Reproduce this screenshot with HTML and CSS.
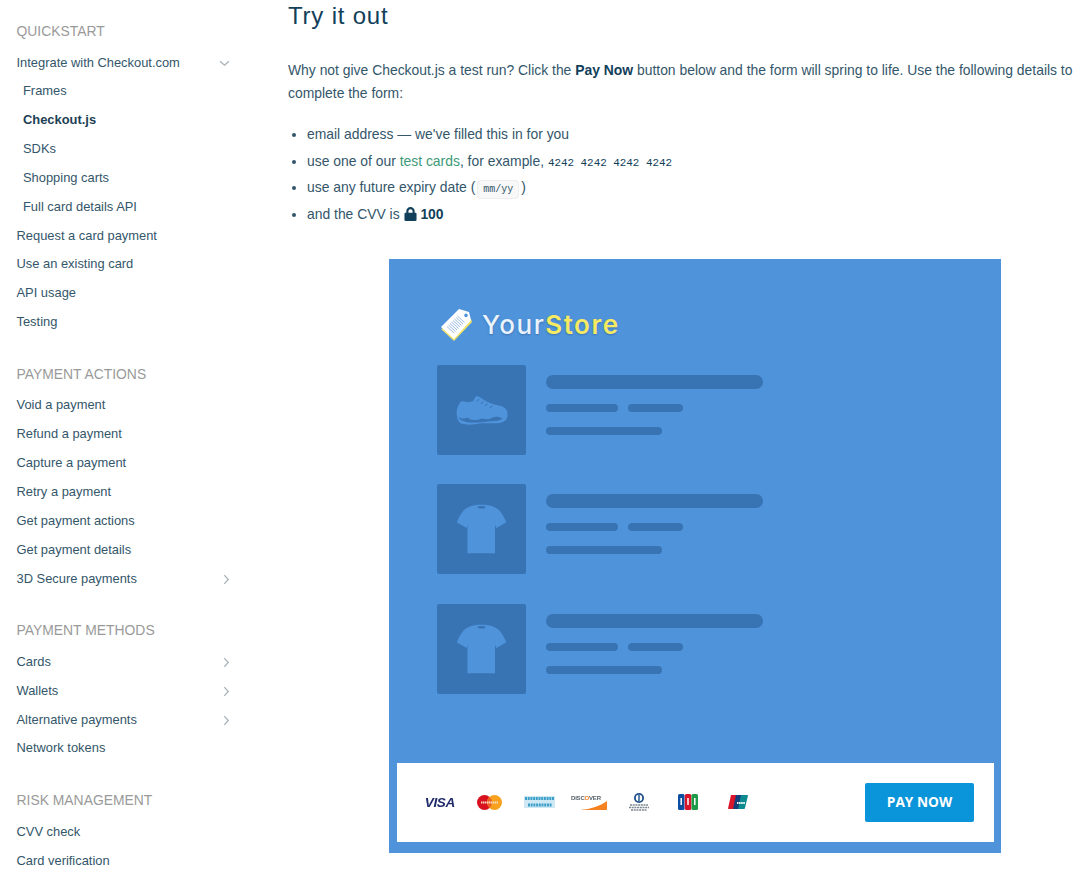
FILE: index.html
```html
<!DOCTYPE html>
<html lang="en">
<head>
    <meta charset="UTF-8">
    <title>Checkout.js - Try it out</title>
    <link rel="stylesheet" href="styles.css">
</head>
<body>
    <nav class="sidebar">
        <h4 class="nav-title">QUICKSTART</h4>
        <ul class="nav-list">
            <li class="nav-item">Integrate with Checkout.com
                <svg class="chevron chevron-down" viewBox="0 0 12 8"><path d="M1 1.500l5 4.500 5-4.500"/></svg>
            </li>
            <li class="nav-item nav-sub">Frames</li>
            <li class="nav-item nav-sub nav-active">Checkout.js</li>
            <li class="nav-item nav-sub">SDKs</li>
            <li class="nav-item nav-sub">Shopping carts</li>
            <li class="nav-item nav-sub">Full card details API</li>
            <li class="nav-item">Request a card payment</li>
            <li class="nav-item">Use an existing card</li>
            <li class="nav-item">API usage</li>
            <li class="nav-item">Testing</li>
        </ul>

        <h4 class="nav-title">PAYMENT ACTIONS</h4>
        <ul class="nav-list">
            <li class="nav-item">Void a payment</li>
            <li class="nav-item">Refund a payment</li>
            <li class="nav-item">Capture a payment</li>
            <li class="nav-item">Retry a payment</li>
            <li class="nav-item">Get payment actions</li>
            <li class="nav-item">Get payment details</li>
            <li class="nav-item">3D Secure payments
                <svg class="chevron" viewBox="0 0 8 12"><path d="M1.500 1l4.500 5-4.500 5"/></svg>
            </li>
        </ul>

        <h4 class="nav-title">PAYMENT METHODS</h4>
        <ul class="nav-list">
            <li class="nav-item">Cards
                <svg class="chevron" viewBox="0 0 8 12"><path d="M1.500 1l4.500 5-4.500 5"/></svg>
            </li>
            <li class="nav-item">Wallets
                <svg class="chevron" viewBox="0 0 8 12"><path d="M1.500 1l4.500 5-4.500 5"/></svg>
            </li>
            <li class="nav-item">Alternative payments
                <svg class="chevron" viewBox="0 0 8 12"><path d="M1.500 1l4.500 5-4.500 5"/></svg>
            </li>
            <li class="nav-item">Network tokens</li>
        </ul>

        <h4 class="nav-title">RISK MANAGEMENT</h4>
        <ul class="nav-list">
            <li class="nav-item">CVV check</li>
            <li class="nav-item">Card verification</li>
        </ul>
    </nav>

    <main class="content">
        <h2 class="page-title">Try it out</h2>
        <p class="intro">Why not give Checkout.js a test run? Click the <strong>Pay Now</strong> button below and the form will spring to life. Use the following details to complete the form:</p>
        <ul class="details">
            <li>email address — we've filled this in for you</li>
            <li>use one of our <a class="link" href="#">test cards</a>, for example, <span class="mono">4242 4242 4242 4242</span></li>
            <li>use any future expiry date (<code class="pill">mm/yy</code>)</li>
            <li>and the CVV is
                <svg class="lock" viewBox="0 0 14 15"><path d="M2.500 6.200V4.400a4.500 4.400 0 0 1 9 0v1.800h.7c.8 0 1.300.5 1.300 1.300v6.200c0 .8-.5 1.300-1.300 1.300H1.800C1 15 .5 14.500.5 13.700V7.500c0-.8.5-1.300 1.300-1.300zm2.300 0h4.400V4.400a2.200 2.100 0 0 0-4.400 0z"/></svg>
                <strong>100</strong></li>
        </ul>

        <div class="demo">
            <div class="store-logo">
                <svg class="tag" viewBox="0 0 34 34">
                    <path class="tag-edge" d="M1 21l13 12 18-19-1-3z"/>
                    <path class="tag-face" d="M1 19L14 31 31 12 29 4 19 1zM26 5.500a1.800 1.800 0 1 0 .01 0z"/>
                    <path class="tag-code" d="M7 18.500l7 6.500M8.500 17l7 6.500M10 15.500l7 6.500M11.500 14l7 6.500M13 12.500l7 6.500M14.500 11l7 6.500M16 9.500l7 6.500M17.500 8l7 6.500"/>
                </svg>
                <span class="store-name">Your<span class="store-accent">Store</span></span>
            </div>

            <div class="product">
                <div class="thumb">
                    <svg viewBox="0 0 89 89">
                        <path class="thumb-shape" d="M20 44C21 40 23 37 25 36 29 37.500 33 37.500 36 36L39 31C42 31 44 33 47 35 52 38 58 40 64 41 68 42 71 45 70.500 50 70.500 54 68 57 63 58 55 59 48 57.500 43 58.500 36 60 29 60 24 58.500 20 56 19 50 20 44z"/>
                        <path class="thumb-wave" d="M21.500 52c3 2 6 2 9 .5 3 3 9 3.500 14 1 4 .5 7 1.500 10-.5 4-2 8-1.500 11 .5-4 3-10 2.500-15 3-6 1-14 1.500-21 .5-4-1-7-2-8-4.500z"/>
                        <path class="thumb-line" d="M42 34l-2 2.500M46 36.500l-2 2.500M50.500 38.500l-2 2.500M55 40.500l-2 2.500"/>
                    </svg>
                </div>
                <div class="lines">
                    <span class="bar bar-title"></span>
                    <div class="bar-row"><span class="bar bar-a"></span><span class="bar bar-b"></span></div>
                    <span class="bar bar-c"></span>
                </div>
            </div>

            <div class="product">
                <div class="thumb">
                    <svg viewBox="0 0 89 89">
                        <path class="thumb-shape" d="M44.500 20.700C37 20.700 31 22.500 27 26 24 29.500 21.500 34 19.700 38.300L29.500 44 30.500 41V69.300H58V41L59.500 44 69.300 38.300C67.500 34 65 29.500 62 26 58 22.500 52 20.700 44.500 20.700z"/>
                        <ellipse class="thumb-collar" cx="44.500" cy="23.300" rx="4" ry="1.200"/>
                    </svg>
                </div>
                <div class="lines">
                    <span class="bar bar-title"></span>
                    <div class="bar-row"><span class="bar bar-a"></span><span class="bar bar-b"></span></div>
                    <span class="bar bar-c"></span>
                </div>
            </div>

            <div class="product">
                <div class="thumb">
                    <svg viewBox="0 0 89 89">
                        <path class="thumb-shape" d="M44.500 20.700C37 20.700 31 22.500 27 26 24 29.500 21.500 34 19.700 38.300L29.500 44 30.500 41V69.300H58V41L59.500 44 69.300 38.300C67.500 34 65 29.500 62 26 58 22.500 52 20.700 44.500 20.700z"/>
                        <ellipse class="thumb-collar" cx="44.500" cy="23.300" rx="4" ry="1.200"/>
                    </svg>
                </div>
                <div class="lines">
                    <span class="bar bar-title"></span>
                    <div class="bar-row"><span class="bar bar-a"></span><span class="bar bar-b"></span></div>
                    <span class="bar bar-c"></span>
                </div>
            </div>

            <div class="pay-bar">
                <div class="card-logos">
                    <span class="card-slot"><span class="visa">VISA</span></span>
                    <span class="card-slot">
                        <svg width="25" height="15" viewBox="0 0 25 15">
                            <circle cx="7.500" cy="7.500" r="7.500" fill="#d8111f"/>
                            <circle cx="17.500" cy="7.500" r="7.500" fill="#f7a11d"/>
                            <path d="M12.500 1.900a7.500 7.500 0 0 1 0 11.200 7.500 7.500 0 0 1 0-11.200z" fill="#ef5f22"/>
                            <path d="M4 7.500h17" stroke="#f6d9c0" stroke-width="2" stroke-dasharray="1.500 .5"/>
                        </svg>
                    </span>
                    <span class="card-slot">
                        <svg width="31" height="12" viewBox="0 0 31 12">
                            <rect width="31" height="12" fill="#cfe9f4"/>
                            <path d="M1 2.500h29M4 9h24" stroke="#3c9fc9" stroke-width="3" stroke-dasharray="2 .7"/>
                        </svg>
                    </span>
                    <span class="card-slot">
                        <svg width="36" height="16" viewBox="0 0 36 16">
                            <text x="0" y="6" class="discover-text" textLength="30">DISC<tspan fill="#f58220">O</tspan>VER</text>
                            <path d="M9 16c11-1 20-4 27-9v8c0 .6-.4 1-1 1z" fill="#f58220"/>
                        </svg>
                    </span>
                    <span class="card-slot">
                        <svg width="22" height="18" viewBox="0 0 22 18">
                            <circle cx="11" cy="5" r="5" fill="#1d4f8c"/>
                            <circle cx="11" cy="5" r="3.200" fill="#fff"/>
                            <rect x="10.300" y="2" width="1.400" height="6" fill="#1d4f8c"/>
                            <path d="M2 12h18M1 14.500h20M3 17h16" stroke="#7c8790" stroke-width="1.500" stroke-dasharray="2 .7"/>
                        </svg>
                    </span>
                    <span class="card-slot">
                        <svg width="20" height="16" viewBox="0 0 20 16">
                            <rect width="6.500" height="16" rx="1.500" fill="#0b4ea2"/>
                            <rect x="6.800" width="6.500" height="16" rx="1.500" fill="#d9142b"/>
                            <rect x="13.500" width="6.500" height="16" rx="1.500" fill="#1d9a45"/>
                            <path d="M3.200 4v7M10 4v7M16.800 4v7" stroke="#fff" stroke-width="1.500"/>
                        </svg>
                    </span>
                    <span class="card-slot">
                        <svg width="20" height="14" viewBox="0 0 20 14">
                            <path d="M3 0h7L7 14H1c-.7 0-1-.4-.9-1z" fill="#d9142b"/>
                            <path d="M8 0h7l-3 14H5z" fill="#133e7c"/>
                            <path d="M13 0h6c.7 0 1 .4.900 1L17 13c-.1.600-.5 1-1 1h-6z" fill="#0b8a8f"/>
                            <path d="M9 8h8" stroke="#fff" stroke-width="2" stroke-dasharray="1.500 .6"/>
                        </svg>
                    </span>
                </div>
                <button class="pay-button">PAY NOW</button>
            </div>
        </div>
    </main>
</body>
</html>
```

FILE: styles.css
```css
html, body {
    height: 875px;
    overflow: hidden;
}

body {
    margin: 0;
    padding: 0;
    display: flex;
    background: #fff;
    color: #33566a;
    font-family: "Liberation Sans", Arial, sans-serif;
    font-size: 13px;
}

/* sidebar */
.sidebar {
    flex: 0 0 288px;
    padding: 23px 0 0 16.500px;
    box-sizing: border-box;
}

.nav-title {
    margin: 0 0 9.500px;
    font-size: 13.900px;
    line-height: 16px;
    font-weight: normal;
    color: #9a9a9a;
}

.nav-list {
    list-style: none;
    margin: 0 0 29px;
    padding: 0;
}

.nav-item {
    position: relative;
    width: 212px;
    height: 28.850px;
    line-height: 28.850px;
    font-size: 12.900px;
    white-space: nowrap;
    color: #33566a;
}

.nav-sub {
    padding-left: 6.500px;
    box-sizing: border-box;
}

.nav-active {
    font-weight: bold;
    color: #1d3f55;
}

.chevron {
    position: absolute;
    right: -1px;
    top: 9px;
    width: 7px;
    height: 11px;
    fill: none;
    stroke: #a5afb6;
    stroke-width: 1.400;
}

.chevron-down {
    right: -1px;
    top: 11px;
    width: 11px;
    height: 7px;
}

/* main column */
.content {
    flex: 1;
    min-width: 0;
    padding-right: 4px;
}

.page-title {
    margin: 2px 0 0;
    font-size: 24px;
    line-height: 28px;
    font-weight: normal;
    letter-spacing: .8px;
    color: #12405a;
}

.intro {
    margin: 29px 0 0;
    font-size: 13.900px;
    line-height: 23px;
    color: #33566a;
}

.intro strong,
.details strong {
    color: #12405a;
}

.details {
    margin: 16px 0 0;
    padding: 0 0 0 19px;
    font-size: 13.900px;
    line-height: 26.700px;
}

.details li {
    height: 26.700px;
}

.link {
    color: #3c9a78;
    text-decoration: none;
}

.mono {
    font-family: "Liberation Mono", monospace;
    font-size: 10.900px;
    color: #12405a;
}

.pill {
    margin: 0 2px;
    padding: 3px 5px;
    border: 1px solid #eee;
    border-radius: 4px;
    background: #f8f8f8;
    font-family: "Liberation Mono", monospace;
    font-size: 10px;
}

.lock {
    width: 13px;
    height: 14px;
    vertical-align: -2px;
    fill: #12405a;
}

/* checkout demo picture */
.demo {
    display: flex;
    flex-direction: column;
    width: 612px;
    height: 594px;
    box-sizing: border-box;
    margin: 31px 0 0 101px;
    padding: 48px 7px 11px 8px;
    background: #4f93db;
}

.store-logo {
    display: flex;
    align-items: center;
    gap: 8px;
    height: 36px;
    margin-left: 43px;
    margin-bottom: 22px;
}

.tag {
    width: 34px;
    height: 34px;
}

.tag-face {
    fill: #fff;
    fill-rule: evenodd;
}

.tag-edge {
    fill: #f0e36a;
}

.tag-code {
    stroke: #7fa8d8;
    stroke-width: .8;
}

.store-name {
    font-family: Inter, sans-serif;
    font-size: 26px;
    font-weight: 500;
    letter-spacing: 1.500px;
    color: #eaf3fb;
    text-shadow: 0 1px 2px rgba(30, 70, 120, .4);
}

.store-accent {
    font-weight: 600;
    color: #f5ea62;
}

.product {
    display: flex;
    gap: 20px;
    margin-left: 40px;
    margin-bottom: 29.500px;
}

.thumb {
    width: 89px;
    height: 90px;
    background: #3873b3;
    border-radius: 2px;
}

.thumb svg {
    display: block;
    width: 89px;
    height: 89px;
}

.thumb-shape {
    fill: #4f93db;
}

.thumb-wave,
.thumb-collar {
    fill: #3873b3;
}

.thumb-line {
    fill: none;
    stroke: #3873b3;
    stroke-width: 1;
}

.lines {
    display: flex;
    flex-direction: column;
    padding-top: 10px;
}

.bar {
    display: block;
    background: #3873b3;
    border-radius: 7px;
}

.bar-title {
    width: 217px;
    height: 14px;
}

.bar-row {
    display: flex;
    gap: 10px;
    margin: 15px 0;
}

.bar-a {
    width: 72px;
    height: 8px;
}

.bar-b {
    width: 55px;
    height: 8px;
}

.bar-c {
    width: 116px;
    height: 8px;
}

.pay-bar {
    display: flex;
    align-items: center;
    justify-content: space-between;
    margin-top: auto;
    height: 79px;
    padding: 0 20px 0 18px;
    background: #fff;
}

.card-logos {
    display: flex;
    align-items: center;
    filter: blur(.3px);
}

.card-slot {
    display: flex;
    align-items: center;
    justify-content: center;
    width: 49.700px;
    height: 20px;
}

.visa {
    font-family: "Liberation Sans", sans-serif;
    font-size: 13.500px;
    font-style: italic;
    font-weight: bold;
    letter-spacing: -.3px;
    color: #1f2a6b;
}

.discover-text {
    font-family: "Liberation Sans", sans-serif;
    font-size: 6px;
    font-weight: bold;
    fill: #55606a;
}

.pay-button {
    width: 109px;
    height: 39px;
    padding: 0 0 2px;
    border: none;
    border-radius: 2px;
    background: #0a94d9;
    color: #fff;
    font-family: "Open Sans", sans-serif;
    font-size: 13.700px;
    font-weight: bold;
}
```
